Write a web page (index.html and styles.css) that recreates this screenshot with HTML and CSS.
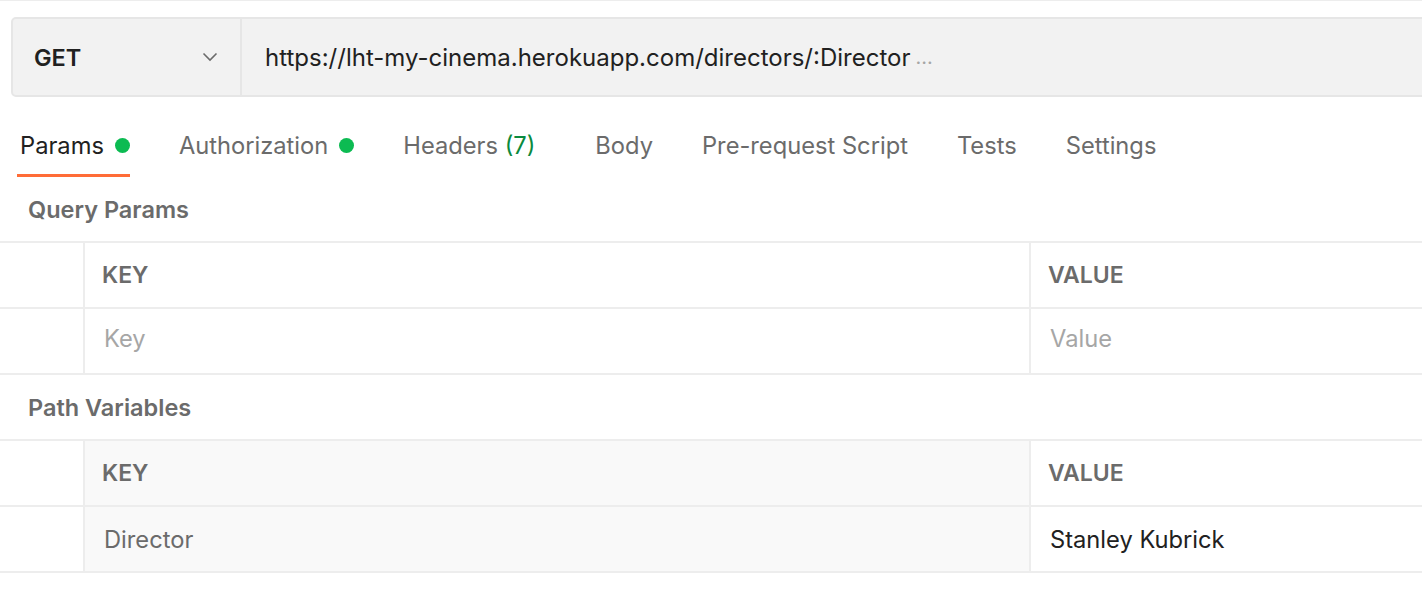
FILE: index.html
```html
<!DOCTYPE html>
<html>
<head>
<meta charset="utf-8">
<link rel="stylesheet" href="styles.css">
</head>
<body>
<div class="page">
  <div class="urlbar">
    <div class="method">
      <span class="method-name">GET</span>
      <svg class="chevron" width="16" height="10" viewBox="0 0 16 10"><path d="M1.5 1.5 L8 8 L14.5 1.5" fill="none" stroke="#6b6b6b" stroke-width="1.6"/></svg>
    </div>
    <div class="url">https://lht-my-cinema.herokuapp.com/directors/:Director<span class="more">...</span></div>
  </div>

  <div class="tabs">
    <div class="tab active">Params<span class="dot"></span></div>
    <div class="tab">Authorization<span class="dot"></span></div>
    <div class="tab headers">Headers <span class="count">(7)</span></div>
    <div class="tab">Body</div>
    <div class="tab">Pre-request Script</div>
    <div class="tab">Tests</div>
    <div class="tab">Settings</div>
  </div>

  <div class="section-title">Query Params</div>
  <div class="table">
    <div class="row head">
      <div class="cell check"></div>
      <div class="cell key">KEY</div>
      <div class="cell value">VALUE</div>
    </div>
    <div class="row">
      <div class="cell check"></div>
      <div class="cell key placeholder">Key</div>
      <div class="cell value placeholder">Value</div>
    </div>
  </div>

  <div class="section-title">Path Variables</div>
  <div class="table path">
    <div class="row head">
      <div class="cell check"></div>
      <div class="cell key">KEY</div>
      <div class="cell value">VALUE</div>
    </div>
    <div class="row">
      <div class="cell check"></div>
      <div class="cell key locked">Director</div>
      <div class="cell value filled">Stanley Kubrick</div>
    </div>
  </div>
</div>
</body>
</html>
```

FILE: styles.css
```css
html, body {
  margin: 0;
  padding: 0;
  background: #ffffff;
  overflow: hidden;
}
body {
  font-family: Inter, "Noto Sans", "Liberation Sans", sans-serif;
  color: #212121;
}
.page {
  border-top: 1px solid #ededed;
  width: 1422px;
  height: 608px;
  overflow: hidden;
}
.urlbar {
  margin: 16px 0 0 11px;
  width: 1430px;
  height: 76px;
  display: flex;
  background: #f2f2f2;
  border: 2px solid #e6e6e6;
  border-radius: 5px;
}
.method {
  width: 229px;
  flex: none;
  display: flex;
  align-items: center;
  justify-content: space-between;
  padding: 0 22px 0 21px;
  box-sizing: border-box;
  border-right: 2px solid #e6e6e6;
}
.method-name {
  font-weight: 600;
  font-size: 23.5px;
  color: #212121;
}
.chevron { display: block; }
.url {
  display: flex;
  align-items: center;
  padding-left: 23px;
  font-size: 24px;
  color: #212121;
  white-space: nowrap;
}
.url .more {
  color: #a6a6a6;
  margin-left: 5px;
  font-size: 20px;
}
.tabs {
  display: flex;
  gap: 46px;
  padding-left: 17px;
  height: 80px;
  box-sizing: border-box;
  align-items: stretch;
}
.tab {
  display: flex;
  align-items: center;
  font-size: 23.7px;
  color: #6b6b6b;
  padding: 19px 0 0 3px;
  border-bottom: 3px solid transparent;
  white-space: pre;
}
.tab.active {
  color: #212121;
  border-bottom-color: #ff6c37;
}
.tab.headers { margin-right: 11px; }
.tab .count { color: #0a8a3e; }
.dot {
  width: 15px;
  height: 15px;
  border-radius: 50%;
  background: #0cbb52;
  margin-left: 11px;
}
.section-title {
  height: 64px;
  display: flex;
  align-items: center;
  padding-left: 28px;
  font-size: 23.5px;
  font-weight: 600;
  color: #6b6b6b;
  box-sizing: border-box;
}
.table {
  border-top: 2px solid #ededed;
}
.row {
  display: flex;
  height: 66px;
  border-bottom: 2px solid #ededed;
  box-sizing: border-box;
}
.cell {
  display: flex;
  align-items: center;
  font-size: 23.7px;
  box-sizing: border-box;
}
.check {
  width: 85px;
  border-right: 2px solid #ededed;
  flex: none;
}
.key {
  width: 946px;
  border-right: 2px solid #ededed;
  flex: none;
  padding-left: 17px;
}
.value {
  flex: 1;
  padding-left: 17px;
}
.head .cell {
  font-weight: 600;
  color: #6b6b6b;
  font-size: 23px;
}
.placeholder {
  color: #a6a6a6;
  padding-left: 19px;
  padding-bottom: 6px;
}
.path .key { background: #f9f9f9; }
.locked {
  color: #6b6b6b;
  padding-left: 19px;
}
.filled {
  color: #212121;
  padding-left: 19px;
}
```
